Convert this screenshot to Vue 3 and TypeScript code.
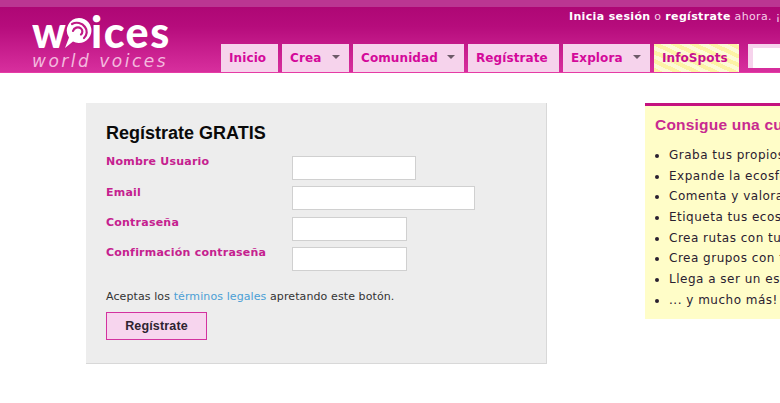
<script setup lang="ts">
interface NavItem { label: string; width: number; caret?: boolean; special?: boolean }
const nav: NavItem[] = [
  { label: 'Inicio', width: 57 },
  { label: 'Crea', width: 67, caret: true },
  { label: 'Comunidad', width: 111, caret: true },
  { label: 'Regístrate', width: 91 },
  { label: 'Explora', width: 87, caret: true },
  { label: 'InfoSpots', width: 85, special: true },
]
const fields = [
  { label: 'Nombre Usuario', width: 124 },
  { label: 'Email', width: 183 },
  { label: 'Contraseña', width: 115 },
  { label: 'Confirmación contraseña', width: 115 },
]
const perks = [
  'Graba tus propios ecosonidos',
  'Expande la ecosfera sonora',
  'Comenta y valora ecosonidos',
  'Etiqueta tus ecosonidos',
  'Crea rutas con tus sonidos',
  'Crea grupos con tus amigos',
  'Llega a ser un especialista',
  '... y mucho más!',
]
</script>

<template>
  <div class="page">
    <header class="header">
      <div class="topband"></div>
      <div class="masthead">
        <div class="logo">
          <div class="logo-main">
            <span class="w">w</span>
            <svg class="swirl" width="28" height="34" viewBox="0 0 28 34">
              <path d="M15 2a12.500 12.500 0 1 1-6 23.500L1 32l4-10.500A12.500 12.500 0 0 1 15 2z" fill="#fff" />
              <path d="M9 15a5 5 0 0 1 8-2.500 4 4 0 0 1 0 6M8 8a10 10 0 0 1 13 3 8 8 0 0 1-1 11" fill="none" stroke="#c01a85" stroke-width="2.200" stroke-linecap="round" />
            </svg>
            <span class="rest">ices</span>
          </div>
          <div class="logo-sub">world voices</div>
        </div>
        <div class="masthead-right">
          <p class="session"><b>Inicia sesión</b> o <b>regístrate</b> ahora. ¡Bienvenido a Woices!</p>
          <nav class="nav">
            <a
              v-for="item in nav"
              :key="item.label"
              class="nav-item"
              :class="{ special: item.special }"
              :style="{ width: item.width + 'px' }"
            >
              {{ item.label }}<i v-if="item.caret" class="caret"></i>
            </a>
            <div class="search"><span class="search-input"></span></div>
          </nav>
        </div>
      </div>
    </header>

    <main class="main">
      <section class="panel">
        <h1>Regístrate GRATIS</h1>
        <div class="form">
          <template v-for="f in fields" :key="f.label">
            <label>{{ f.label }}</label>
            <input type="text" :style="{ width: f.width + 'px' }" />
          </template>
        </div>
        <p class="terms">Aceptas los <a>términos legales</a> apretando este botón.</p>
        <button type="button">Regístrate</button>
      </section>
      <aside class="side">
        <h2>Consigue una cuenta gratis</h2>
        <ul>
          <li v-for="p in perks" :key="p">{{ p }}</li>
        </ul>
      </aside>
    </main>
  </div>
</template>

<style>
html, body { margin: 0; background: #fff; overflow: hidden; }
</style>

<style scoped>
.page { width: 780px; height: 403px; overflow: hidden; font-family: "DejaVu Sans", sans-serif; }
.header { height: 74px; box-sizing: border-box; border-bottom: 1px solid #fff; background: #e53ba5; }
.topband { height: 7px; background: #bb3692; }
.masthead {
  height: 65px;
  display: flex;
  background: linear-gradient(#ae0775 0%, #b60c7c 30%, #d62d9c 96%);
}
.logo { width: 221px; flex: none; padding: 6px 0 0 32px; box-sizing: border-box; color: #fff; }
.logo-main {
  display: flex;
  align-items: flex-end;
  height: 37px;
  font: 900 43px/37px Lato, sans-serif;
}
.w { display: block; width: 34px; transform: scaleX(.97); transform-origin: left; }
.swirl { margin: 0 -1px 0 -2px; flex: none; }
.rest { letter-spacing: 1.500px; }
.logo-sub {
  font: italic 400 17px/14px "DejaVu Sans", sans-serif;
  color: #f3b9de;
  letter-spacing: 2.500px;
  margin-top: 4px;
  white-space: nowrap;
}
.masthead-right { flex: 1; min-width: 0; display: flex; flex-direction: column; }
.session {
  margin: 3px 0 0 348px;
  height: 34px;
  font-size: 11px;
  line-height: 14px;
  letter-spacing: 0.350px;
  color: #f5cfe9;
  white-space: nowrap;
}
.session b { color: #fff; }
.nav { display: flex; gap: 4px; height: 28px; }
.nav-item {
  flex: none;
  box-sizing: border-box;
  height: 28px;
  padding-left: 8px;
  display: flex;
  align-items: center;
  background: #f6d3ec;
  color: #d4099a;
  font: 700 12px/1 "DejaVu Sans", sans-serif;
  letter-spacing: 0.100px;
  white-space: nowrap;
  position: relative;
}
.nav-item.special {
  background: repeating-linear-gradient(25deg, #fdf3a6 0 4px, #fdfad6 4px 8px);
  color: #c80f8e;
}
.caret {
  position: absolute;
  right: 9px;
  top: 11px;
  width: 0;
  height: 0;
  border: 4px solid transparent;
  border-top: 4px solid #6d5a68;
  border-bottom: 0;
}
.search {
  margin-left: 5px;
  width: 60px;
  height: 24px;
  background: #f6d3ec;
  padding: 4px 5px;
  box-sizing: border-box;
  flex: none;
}
.search-input { display: block; height: 20px; background: #fff; }
.main { display: flex; align-items: flex-start; padding: 29px 0 0 86px; }
.panel {
  width: 461px;
  height: 261px;
  box-sizing: border-box;
  flex: none;
  background: #ededed;
  border-right: 1px solid #d8d8d8;
  border-bottom: 1px solid #d8d8d8;
  padding: 20px 0 0 20px;
}
h1 {
  margin: 0;
  height: 33px;
  font: 700 18px/21px "Liberation Sans", sans-serif;
  color: #0a0a0a;
}
.form { display: grid; grid-template-columns: 186px 1fr; grid-auto-rows: 30.400px; }
.form label {
  padding-top: 0.300px;
  font-weight: 700;
  font-size: 11px;
  line-height: 12px;
  letter-spacing: 0.220px;
  color: #c5218f;
}
.form input {
  box-sizing: border-box;
  height: 24px;
  padding: 0;
  background: #fff;
  border: 1px solid #d0d0d0;
  border-radius: 0;
  outline: 0;
}
.terms {
  margin: 12.400px 0 0;
  font-size: 11px;
  line-height: 14px;
  letter-spacing: 0.100px;
  color: #333;
}
.terms a { color: #4b9fd5; }
button {
  display: block;
  margin-top: 8px;
  width: 101px;
  height: 28px;
  box-sizing: border-box;
  padding: 0;
  background: #f7d5ee;
  border: 1px solid #d3329f;
  font: 700 12.500px/1 "Liberation Sans", sans-serif;
  letter-spacing: 0.150px;
  color: #2e2430;
}
.side {
  width: 300px;
  height: 216px;
  box-sizing: border-box;
  flex: none;
  margin-left: 98px;
  background: #fffdc8;
  border-top: 3px solid #c4127f;
  padding: 9px 0 0 10px;
}
h2 {
  margin: 0;
  font: 700 15.500px/20px "Liberation Sans", sans-serif;
  letter-spacing: 0.2px;
  color: #c82a90;
  white-space: nowrap;
}
ul { margin: 10px 0 0; padding: 0 0 0 14px; }
li {
  height: 20.700px;
  font-size: 12px;
  line-height: 20.700px;
  letter-spacing: 0.500px;
  color: #2a2030;
  white-space: nowrap;
}
</style>
